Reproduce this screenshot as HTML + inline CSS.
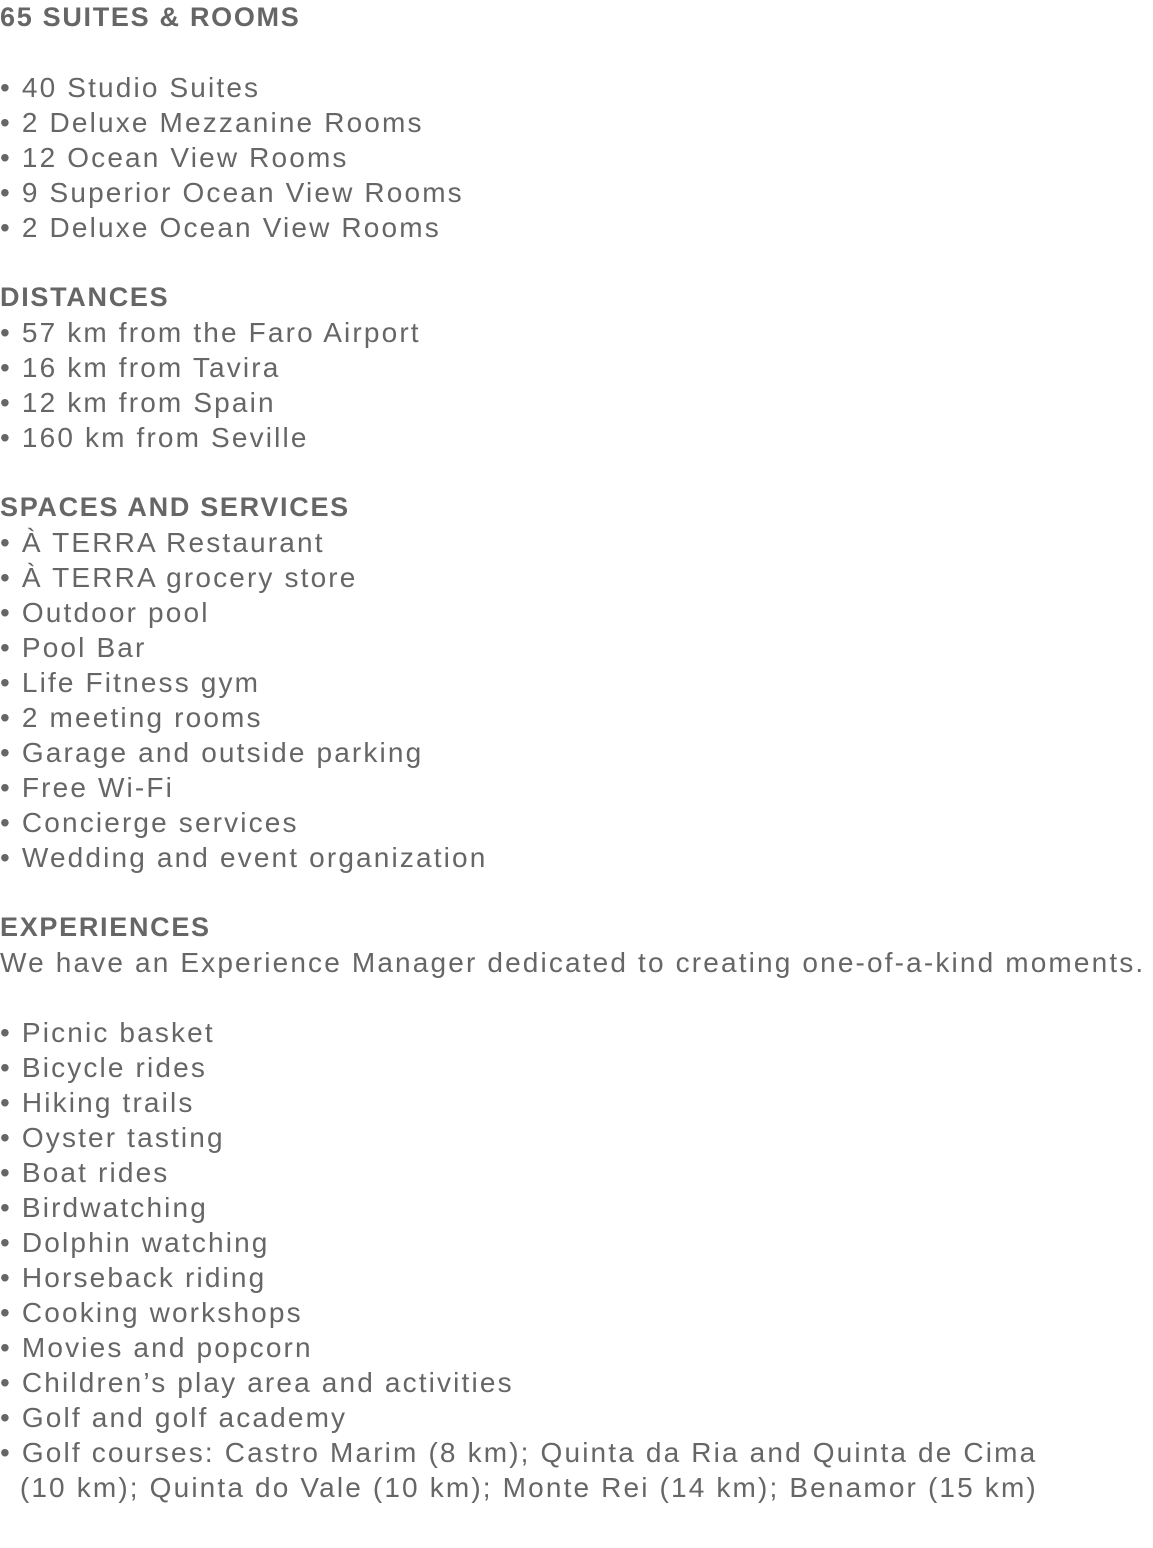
<!DOCTYPE html>
<html><head><meta charset="utf-8"><style>
html,body{margin:0;padding:0;background:#fff;}
body{width:1153px;height:1548px;overflow:hidden;font-family:"Liberation Sans",sans-serif;color:#666;}
.l{height:35px;line-height:35px;font-size:28px;letter-spacing:2.15px;white-space:pre;}
.h{font-weight:bold;font-size:27px;letter-spacing:1.7px;}
</style></head><body>
<div class="l h">65 SUITES &amp; ROOMS</div>
<div class="l"> </div>
<div class="l">• 40 Studio Suites</div>
<div class="l">• 2 Deluxe Mezzanine Rooms</div>
<div class="l">• 12 Ocean View Rooms</div>
<div class="l">• 9 Superior Ocean View Rooms</div>
<div class="l">• 2 Deluxe Ocean View Rooms</div>
<div class="l"> </div>
<div class="l h">DISTANCES</div>
<div class="l">• 57 km from the Faro Airport</div>
<div class="l">• 16 km from Tavira</div>
<div class="l">• 12 km from Spain</div>
<div class="l">• 160 km from Seville</div>
<div class="l"> </div>
<div class="l h">SPACES AND SERVICES</div>
<div class="l">• À TERRA Restaurant</div>
<div class="l">• À TERRA grocery store</div>
<div class="l">• Outdoor pool</div>
<div class="l">• Pool Bar</div>
<div class="l">• Life Fitness gym</div>
<div class="l">• 2 meeting rooms</div>
<div class="l">• Garage and outside parking</div>
<div class="l">• Free Wi-Fi</div>
<div class="l">• Concierge services</div>
<div class="l">• Wedding and event organization</div>
<div class="l"> </div>
<div class="l h">EXPERIENCES</div>
<div class="l">We have an Experience Manager dedicated to creating one-of-a-kind moments.</div>
<div class="l"> </div>
<div class="l">• Picnic basket</div>
<div class="l">• Bicycle rides</div>
<div class="l">• Hiking trails</div>
<div class="l">• Oyster tasting</div>
<div class="l">• Boat rides</div>
<div class="l">• Birdwatching</div>
<div class="l">• Dolphin watching</div>
<div class="l">• Horseback riding</div>
<div class="l">• Cooking workshops</div>
<div class="l">• Movies and popcorn</div>
<div class="l">• Children’s play area and activities</div>
<div class="l">• Golf and golf academy</div>
<div class="l">• Golf courses: Castro Marim (8 km); Quinta da Ria and Quinta de Cima</div>
<div class="l">  (10 km); Quinta do Vale (10 km); Monte Rei (14 km); Benamor (15 km)</div>
</body></html>
